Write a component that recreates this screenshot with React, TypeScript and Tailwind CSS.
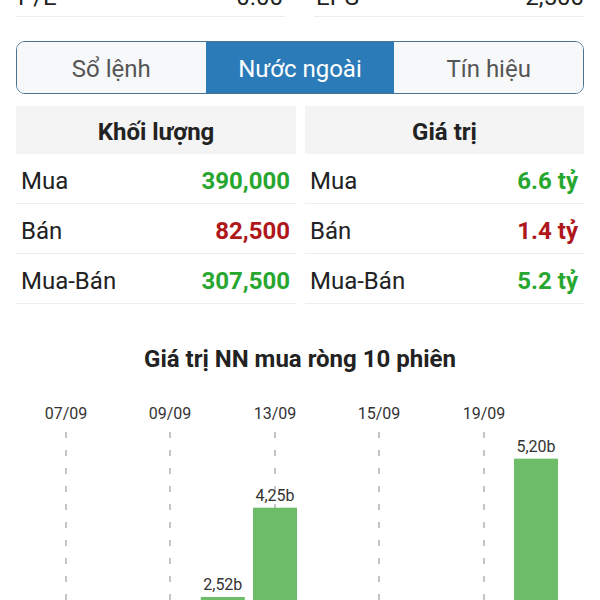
import React from 'react';

interface Row {
  label: string;
  value: string;
  up: boolean;
}

const volumeRows: Row[] = [
  { label: 'Mua', value: '390,000', up: true },
  { label: 'Bán', value: '82,500', up: false },
  { label: 'Mua-Bán', value: '307,500', up: true },
];

const valueRows: Row[] = [
  { label: 'Mua', value: '6.6 tỷ', up: true },
  { label: 'Bán', value: '1.4 tỷ', up: false },
  { label: 'Mua-Bán', value: '5.2 tỷ', up: true },
];

// net buy per session (billion); null = no bar drawn in the visible part
const sessions: (number | null)[] = [null, null, null, null, 2.52, 4.25, null, null, null, null, 5.2];
const dates = [
  { x: 66, label: '07/09' },
  { x: 170, label: '09/09' },
  { x: 275, label: '13/09' },
  { x: 379, label: '15/09' },
  { x: 484, label: '19/09' },
];

const StatTable = ({ title, rows }: { title: string; rows: Row[] }) => (
  <div className="flex flex-col">
    <div className="h-[48px] pt-[3px] bg-[#f4f4f4] flex items-center justify-center text-[24px] font-bold text-[#222]">
      {title}
    </div>
    {rows.map((r) => (
      <div
        key={r.label}
        className="h-[50px] border-b border-[#ececec] flex items-center justify-between pl-[5px] pr-[6px] pt-[4px] text-[24px]"
      >
        <span className="text-[#222]">{r.label}</span>
        <span className={`font-bold ${r.up ? 'text-[#27a630]' : 'text-[#b0171b]'}`}>{r.value}</span>
      </div>
    ))}
  </div>
);

const NetBuyChart = () => {
  const zero = 332;
  const scale = 51.6;
  const barW = 44;
  return (
    <svg width="600" height="205" className="block">
      {dates.map((d) => (
        <g key={d.label}>
          <text x={d.x} y={24} textAnchor="middle" fontSize="16" fill="#333" fontFamily="Roboto, sans-serif">
            {d.label}
          </text>
          <line x1={d.x} x2={d.x} y1={37} y2={205} stroke="#8a8a8a" strokeWidth="1" strokeDasharray="6 12" />
        </g>
      ))}
      {sessions.map((v, i) => {
        if (v === null) return null;
        const cx = 14 + i * 52.2;
        const top = zero - v * scale;
        return (
          <g key={i}>
            <rect x={cx - barW / 2} y={top} width={barW} height={v * scale} fill="#6dbd68" />
            <text x={cx} y={top - 7} textAnchor="middle" fontSize="16" fill="#333" fontFamily="Roboto, sans-serif">
              {v.toFixed(2).replace('.', ',')}b
            </text>
          </g>
        );
      })}
    </svg>
  );
};

export default function App() {
  const tabs = ['Sổ lệnh', 'Nước ngoài', 'Tín hiệu'];
  const active = 1;

  return (
    <div className="w-[600px] h-[600px] overflow-hidden bg-white [font-family:Roboto,sans-serif]">
      <div className="px-4">
        {/* previous section, scrolled off */}
        <div className="-mt-[22px] grid grid-cols-[269px_270px] gap-[29px] text-[24px] text-[#222]">
          <div className="h-[39px] border-b border-[#ececec] flex items-center justify-between pl-[2px] pr-[2px]">
            <span>P/E</span>
            <span>0.00</span>
          </div>
          <div className="h-[39px] border-b border-[#ececec] flex items-center justify-between pl-[2px]">
            <span>EPS</span>
            <span>2,500</span>
          </div>
        </div>

        <div className="mt-[24px] h-[53px] grid grid-cols-3 border-[1.5px] border-[#4b7390] rounded-[9px] overflow-hidden">
          {tabs.map((t, i) => (
            <div
              key={t}
              className={`flex items-center justify-center pt-[3px] text-[24px] ${
                i === active ? 'bg-[#2a7bb8] text-white' : 'bg-[#f7f8f9] text-[#555]'
              }`}
            >
              {t}
            </div>
          ))}
        </div>

        <div className="mt-[12px] grid grid-cols-[280px_279px] gap-[9px]">
          <StatTable title="Khối lượng" rows={volumeRows} />
          <StatTable title="Giá trị" rows={valueRows} />
        </div>
      </div>

      <div className="mt-[43px] text-center text-[24px] leading-[24px] font-bold text-[#222]">
        Giá trị NN mua ròng 10 phiên
      </div>

      <div className="mt-[24px]">
        <NetBuyChart />
      </div>
    </div>
  );
}
